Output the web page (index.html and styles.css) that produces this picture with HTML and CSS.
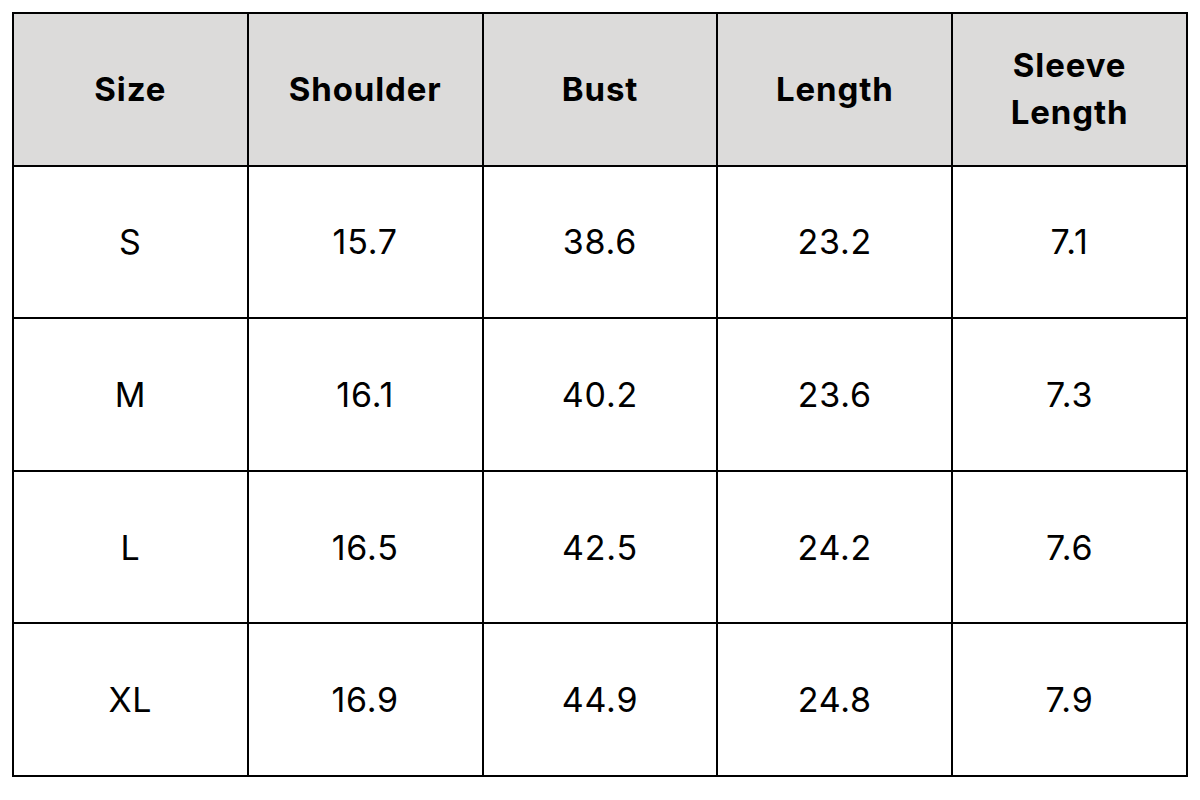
FILE: index.html
```html
<!DOCTYPE html>
<html>
<head>
<meta charset="utf-8">
<link rel="stylesheet" href="styles.css">
</head>
<body>
<table class="size-table">
  <thead>
    <tr>
      <th>Size</th>
      <th>Shoulder</th>
      <th>Bust</th>
      <th>Length</th>
      <th>Sleeve<br>Length</th>
    </tr>
  </thead>
  <tbody>
    <tr><td>S</td><td>15.7</td><td>38.6</td><td>23.2</td><td>7.1</td></tr>
    <tr><td>M</td><td>16.1</td><td>40.2</td><td>23.6</td><td>7.3</td></tr>
    <tr><td>L</td><td>16.5</td><td>42.5</td><td>24.2</td><td>7.6</td></tr>
    <tr><td>XL</td><td>16.9</td><td>44.9</td><td>24.8</td><td>7.9</td></tr>
  </tbody>
</table>
</body>
</html>
```
FILE: styles.css
```css
html, body {
  margin: 0;
  padding: 0;
  background: #ffffff;
}
body {
  padding: 12px;
  font-family: "Inter", "Liberation Sans", sans-serif;
  color: #000000;
}
.size-table {
  border-collapse: collapse;
  width: 1176px;
  table-layout: fixed;
}
.size-table th,
.size-table td {
  border: 2px solid #000000;
  text-align: center;
  vertical-align: middle;
  height: 150.6px;
  padding: 0;
}
.size-table th {
  background: #dcdbda;
  font-weight: 700;
  font-size: 33px;
  line-height: 1.42;
  letter-spacing: 0.9px;
}
.size-table td {
  font-weight: 400;
  font-size: 34px;
  letter-spacing: 0.8px;
}
```
